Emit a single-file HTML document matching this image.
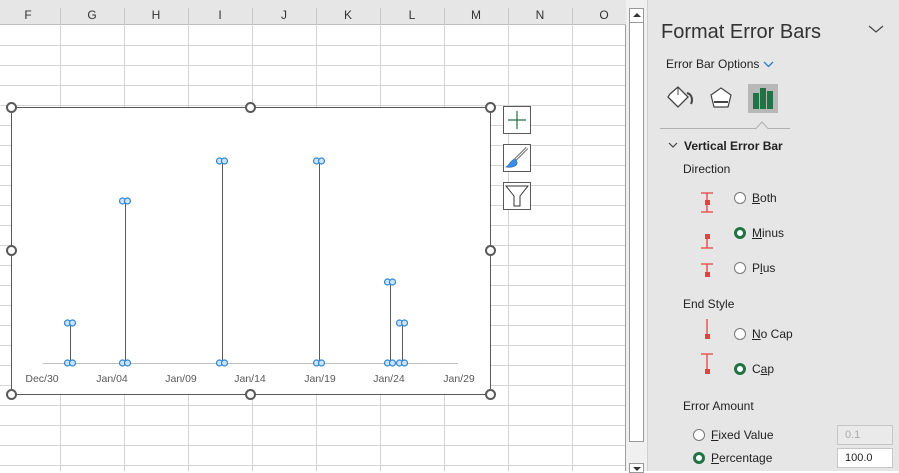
<!DOCTYPE html>
<html><head><meta charset="utf-8"><style>
*{margin:0;padding:0;box-sizing:border-box}
body{width:899px;height:471px;overflow:hidden;background:#fff;font-family:"Liberation Sans",sans-serif;position:relative}
.abs{position:absolute}
.hdr{left:0;top:0;width:626px;height:25px;background:#e6e6e6;border-bottom:1px solid #bdbdbd}
.col{top:8px;font-size:12px;color:#333;width:64px;text-align:center}
.vl{top:8px;width:1px;height:17px;background:#c8c8c8}
.panel{left:647px;top:0;width:252px;height:471px;background:#e6e6e6;border-left:1px solid #d0d0d0}
.t{font-family:"Liberation Sans",sans-serif;color:#222;font-size:12px;position:absolute;white-space:nowrap}
.rad{position:absolute;width:12px;height:12px;border-radius:50%;background:#fff;border:1px solid #777}
.rad.on{border:3px solid #217346;background:#fff}
u{text-decoration:underline}
</style></head><body>
<!-- grid -->
<svg class="abs" style="left:0;top:0" width="626" height="471">
<g stroke="#d4d4d4" stroke-width="1">
<line x1="60.5" y1="25" x2="60.5" y2="471"/><line x1="124.5" y1="25" x2="124.5" y2="471"/><line x1="188.5" y1="25" x2="188.5" y2="471"/><line x1="252.5" y1="25" x2="252.5" y2="471"/><line x1="316.5" y1="25" x2="316.5" y2="471"/><line x1="380.5" y1="25" x2="380.5" y2="471"/><line x1="444.5" y1="25" x2="444.5" y2="471"/><line x1="508.5" y1="25" x2="508.5" y2="471"/><line x1="572.5" y1="25" x2="572.5" y2="471"/>
<line x1="0" y1="45.5" x2="626" y2="45.5"/><line x1="0" y1="65.5" x2="626" y2="65.5"/><line x1="0" y1="85.5" x2="626" y2="85.5"/><line x1="0" y1="105.5" x2="626" y2="105.5"/><line x1="0" y1="125.5" x2="626" y2="125.5"/><line x1="0" y1="145.5" x2="626" y2="145.5"/><line x1="0" y1="165.5" x2="626" y2="165.5"/><line x1="0" y1="185.5" x2="626" y2="185.5"/><line x1="0" y1="205.5" x2="626" y2="205.5"/><line x1="0" y1="225.5" x2="626" y2="225.5"/><line x1="0" y1="245.5" x2="626" y2="245.5"/><line x1="0" y1="265.5" x2="626" y2="265.5"/><line x1="0" y1="285.5" x2="626" y2="285.5"/><line x1="0" y1="305.5" x2="626" y2="305.5"/><line x1="0" y1="325.5" x2="626" y2="325.5"/><line x1="0" y1="345.5" x2="626" y2="345.5"/><line x1="0" y1="365.5" x2="626" y2="365.5"/><line x1="0" y1="385.5" x2="626" y2="385.5"/><line x1="0" y1="405.5" x2="626" y2="405.5"/><line x1="0" y1="425.5" x2="626" y2="425.5"/><line x1="0" y1="445.5" x2="626" y2="445.5"/><line x1="0" y1="465.5" x2="626" y2="465.5"/>
</g><line x1="625.5" y1="25" x2="625.5" y2="471" stroke="#a0a0a0"/></svg>
<div class="abs hdr"></div>
<div class="abs vl" style="left:60px"></div><div class="abs vl" style="left:124px"></div><div class="abs vl" style="left:188px"></div><div class="abs vl" style="left:252px"></div><div class="abs vl" style="left:316px"></div><div class="abs vl" style="left:380px"></div><div class="abs vl" style="left:444px"></div><div class="abs vl" style="left:508px"></div><div class="abs vl" style="left:572px"></div>
<div class="abs col" style="left:-4px">F</div><div class="abs col" style="left:60px">G</div><div class="abs col" style="left:124px">H</div><div class="abs col" style="left:188px">I</div><div class="abs col" style="left:252px">J</div><div class="abs col" style="left:316px">K</div><div class="abs col" style="left:380px">L</div><div class="abs col" style="left:444px">M</div><div class="abs col" style="left:508px">N</div><div class="abs col" style="left:572px">O</div>
<!-- scrollbar -->
<div class="abs" style="left:626px;top:0;width:21px;height:471px;background:#f0f0f0"></div>
<div class="abs" style="left:629px;top:8px;width:15px;height:434px;background:#fff;border:1px solid #999"></div>
<div class="abs" style="left:629px;top:8px;width:15px;height:15px;border:1px solid #999;background:#fff"></div>
<div class="abs" style="left:633px;top:13px;width:0;height:0;border-left:4px solid transparent;border-right:4px solid transparent;border-bottom:4px solid #333"></div>
<div class="abs" style="left:629px;top:463px;width:15px;height:10px;border:1px solid #999;background:#fff"></div>
<div class="abs" style="left:633px;top:467px;width:0;height:0;border-left:4px solid transparent;border-right:4px solid transparent;border-top:4px solid #333"></div>
<!-- chart -->
<svg class="abs" style="left:0;top:0" width="626" height="471">
<rect x="11.5" y="107.5" width="479" height="287" fill="#fff" stroke="#595959"/>
<line x1="43" y1="363.5" x2="458" y2="363.5" stroke="#bfbfbf"/>
<g stroke="#595959" stroke-width="1">
<line x1="70.5" y1="323" x2="70.5" y2="363"/><line x1="125.5" y1="201" x2="125.5" y2="363"/><line x1="222.5" y1="161" x2="222.5" y2="363"/><line x1="319.5" y1="161" x2="319.5" y2="363"/><line x1="390.5" y1="282" x2="390.5" y2="363"/><line x1="402.5" y1="323" x2="402.5" y2="363"/></g>
<g fill="#cfe3f7" stroke="#2e86d6" stroke-width="1.2">
<circle cx="67.5" cy="323" r="3"/><circle cx="72.5" cy="323" r="3"/><circle cx="67.5" cy="363" r="3"/><circle cx="72.5" cy="363" r="3"/>
<circle cx="122.5" cy="201" r="3"/><circle cx="127.5" cy="201" r="3"/><circle cx="122.5" cy="363" r="3"/><circle cx="127.5" cy="363" r="3"/>
<circle cx="219.5" cy="161" r="3"/><circle cx="224.5" cy="161" r="3"/><circle cx="219.5" cy="363" r="3"/><circle cx="224.5" cy="363" r="3"/>
<circle cx="316.5" cy="161" r="3"/><circle cx="321.5" cy="161" r="3"/><circle cx="316.5" cy="363" r="3"/><circle cx="321.5" cy="363" r="3"/>
<circle cx="387.5" cy="282" r="3"/><circle cx="392.5" cy="282" r="3"/><circle cx="387.5" cy="363" r="3"/><circle cx="392.5" cy="363" r="3"/>
<circle cx="399.5" cy="323" r="3"/><circle cx="404.5" cy="323" r="3"/><circle cx="399.5" cy="363" r="3"/><circle cx="404.5" cy="363" r="3"/></g>
<g font-family="Liberation Sans" font-size="10.5" fill="#595959" text-anchor="middle">
<text x="42" y="382">Dec/30</text><text x="112" y="382">Jan/04</text><text x="181" y="382">Jan/09</text><text x="250" y="382">Jan/14</text><text x="320" y="382">Jan/19</text><text x="389" y="382">Jan/24</text><text x="459" y="382">Jan/29</text></g>
<g fill="#fff" stroke="#595959" stroke-width="2">
<circle cx="11.5" cy="107.5" r="4.5"/><circle cx="250.5" cy="107.5" r="4.5"/><circle cx="490.5" cy="107.5" r="4.5"/><circle cx="11.5" cy="250.5" r="4.5"/><circle cx="490.5" cy="250.5" r="4.5"/><circle cx="11.5" cy="394.5" r="4.5"/><circle cx="250.5" cy="394.5" r="4.5"/><circle cx="490.5" cy="394.5" r="4.5"/></g>
<g fill="#fff" stroke="#595959" stroke-width="1">
<rect x="503.5" y="106.5" width="27" height="27"/><rect x="503.5" y="144.5" width="27" height="27"/><rect x="503.5" y="182.5" width="27" height="27"/></g>
<path d="M517 111V129M508 120H526" stroke="#217346" stroke-width="1.2"/>
<path d="M527 148L514 161" stroke="#555" stroke-width="3"/><path d="M527 148L514 161" stroke="#fff" stroke-width="1.2"/>
<path d="M515 159C510 160 510 165 506 167C512 168 518 166 517 162Z" fill="#3a8ee6" stroke="#2066b0" stroke-width=".6"/>
<path d="M506 186H528L520 196V206H514V196Z" fill="#fff" stroke="#333" stroke-width="1"/>
</svg>
<!-- panel -->
<div class="abs panel"></div>
<div class="t" style="left:661px;top:21px;font-size:20px;color:#333">Format Error Bars</div>
<svg class="abs" style="left:868px;top:24px" width="16" height="10"><path d="M1 2L8 8L15 2" fill="none" stroke="#444" stroke-width="1.2"/></svg>
<div class="t" style="left:666px;top:57px">Error Bar Options</div>
<svg class="abs" style="left:763px;top:61px" width="11" height="7"><path d="M1 1L5.5 5.5L10 1" fill="none" stroke="#2b7cd3" stroke-width="1.3"/></svg>
<svg class="abs" style="left:660px;top:80px" width="130" height="55">
<path d="M10 14L18 7L28 17L18 27L8 17Z" fill="#fff" stroke="#444" stroke-width="1.3"/><path d="M18 7V15" stroke="#444"/><path d="M27 13C32 14 33 20 31 24" fill="none" stroke="#444" stroke-width="2"/>
<path d="M61 8L71 15L68 27H54L51 15Z" fill="#fff" stroke="#444" stroke-width="1.2"/><path d="M54 22H68" stroke="#444" stroke-width="2"/>
<rect x="88" y="4" width="30" height="29" fill="#b8b8b8"/>
<rect x="93" y="13" width="6" height="16" fill="#217346"/><rect x="100" y="8" width="6" height="21" fill="#217346"/><rect x="107" y="11" width="6" height="18" fill="#217346"/>
<path d="M0 48.5H96L102 42L108 48.5H240" fill="none" stroke="#b0b0b0"/>
</svg>
<svg class="abs" style="left:668px;top:142px" width="10" height="7"><path d="M1 1L5 5L9 1" fill="none" stroke="#444" stroke-width="1.2"/></svg>
<div class="t" style="left:684px;top:139px;font-weight:bold">Vertical Error Bar</div>
<div class="t" style="left:683px;top:162px">Direction</div>
<div class="t" style="left:683px;top:297px">End Style</div>
<div class="t" style="left:683px;top:399px">Error Amount</div>
<svg class="abs" style="left:698px;top:190px" width="20" height="190" stroke="#e84040" fill="#e84040">
<path d="M3 3H15M9 3V22M3 22H15" fill="none" stroke-width="1.3"/><rect x="7" y="10" width="5" height="5" stroke="none"/>
<path d="M9 46V58M3 58H15" fill="none" stroke-width="1.3"/><rect x="7" y="44" width="5" height="5" stroke="none"/>
<path d="M3 74H15M9 74V85" fill="none" stroke-width="1.3"/><rect x="7" y="82" width="5" height="5" stroke="none"/>
<path d="M9 129V145" fill="none" stroke-width="1.3"/><rect x="7" y="144" width="5" height="5" stroke="none"/>
<path d="M3 164H15M9 164V180" fill="none" stroke-width="1.3"/><rect x="7" y="179" width="5" height="5" stroke="none"/>
</svg>
<div class="rad" style="left:734px;top:192px"></div><div class="t" style="left:752px;top:191px"><u>B</u>oth</div>
<div class="rad on" style="left:734px;top:227px"></div><div class="t" style="left:752px;top:226px"><u>M</u>inus</div>
<div class="rad" style="left:734px;top:262px"></div><div class="t" style="left:752px;top:261px">P<u>l</u>us</div>
<div class="rad" style="left:734px;top:328px"></div><div class="t" style="left:752px;top:327px"><u>N</u>o Cap</div>
<div class="rad on" style="left:734px;top:363px"></div><div class="t" style="left:752px;top:362px">C<u>a</u>p</div>
<div class="rad" style="left:693px;top:429px"></div><div class="t" style="left:711px;top:428px"><u>F</u>ixed Value</div>
<div class="rad on" style="left:693px;top:452px"></div><div class="t" style="left:711px;top:451px"><u>P</u>ercentage</div>
<div class="abs" style="left:837px;top:425px;width:56px;height:20px;background:#eaeaea;border:1px solid #c6c6c6;font-size:11px;color:#aaa;padding:3px 0 0 7px">0.1</div>
<div class="abs" style="left:837px;top:448px;width:56px;height:20px;background:#fff;border:1px solid #c6c6c6;font-size:11px;color:#222;padding:3px 0 0 7px">100.0</div>
</body></html>
